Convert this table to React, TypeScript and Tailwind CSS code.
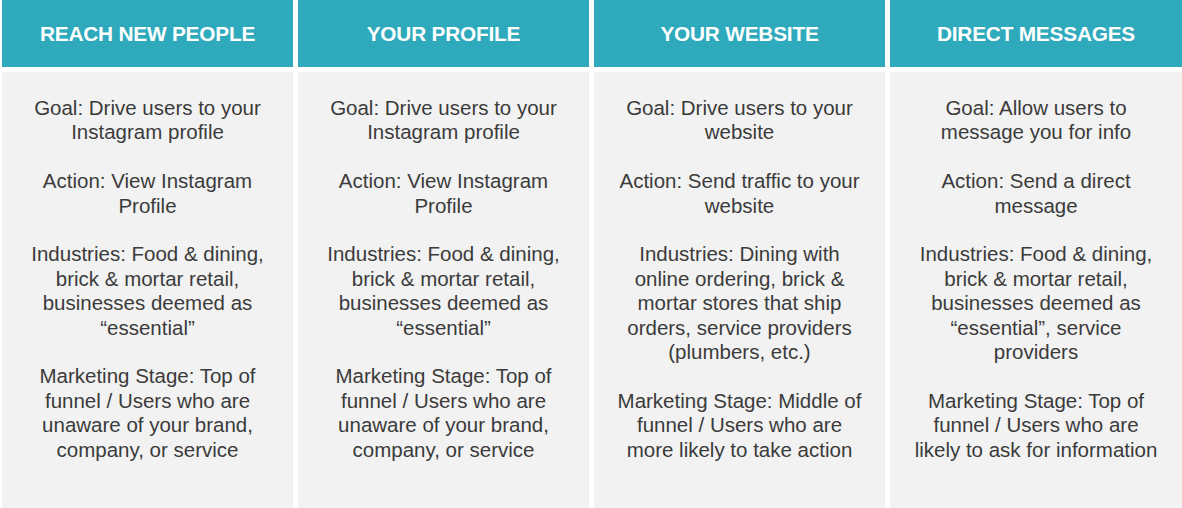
import React from 'react';

type Column = {
  title: string;
  items: string[];
};

const columns: Column[] = [
  {
    title: 'Reach New People',
    items: [
      'Goal: Drive users to your Instagram profile',
      'Action: View Instagram Profile',
      'Industries: Food & dining, brick & mortar retail, businesses deemed as \u201cessential\u201d',
      'Marketing Stage: Top of funnel / Users who are unaware of your brand, company, or service',
    ],
  },
  {
    title: 'Your Profile',
    items: [
      'Goal: Drive users to your Instagram profile',
      'Action: View Instagram Profile',
      'Industries: Food & dining, brick & mortar retail, businesses deemed as \u201cessential\u201d',
      'Marketing Stage: Top of funnel / Users who are unaware of your brand, company, or service',
    ],
  },
  {
    title: 'Your Website',
    items: [
      'Goal: Drive users to your website',
      'Action: Send traffic to your website',
      'Industries: Dining with online ordering, brick & mortar stores that ship orders, service providers (plumbers, etc.)',
      'Marketing Stage: Middle of funnel / Users who are more likely to take action',
    ],
  },
  {
    title: 'Direct Messages',
    items: [
      'Goal: Allow users to message you for info',
      'Action: Send a direct message',
      'Industries: Food & dining, brick & mortar retail, businesses deemed as \u201cessential\u201d, service providers',
      'Marketing Stage: Top of funnel / Users who are likely to ask for information',
    ],
  },
];

export default function App() {
  return (
    <div className="w-[1182px] h-[508px] bg-white pl-[2px] overflow-hidden font-['Liberation_Sans',Arial,sans-serif]">
      <div className="grid grid-cols-[291px_291px_291px_292px] gap-x-[5px] h-full">
        {columns.map((col) => (
          <div key={col.title} className="flex flex-col h-full">
            <div className="h-[67px] bg-[#2eaabc] flex items-center justify-center pt-[1px]">
              <h2 className="text-white font-bold text-[20.8px] uppercase tracking-[-0.2px]">{col.title}</h2>
            </div>
            <div className="mt-[5px] flex-1 bg-[#f2f2f2] px-5 pt-[24px] text-center text-[20.5px] leading-[24.4px] text-[#3b3b3b]">
              {col.items.map((item, i) => (
                <p key={i} className="mb-[24.4px]">
                  {item}
                </p>
              ))}
            </div>
          </div>
        ))}
      </div>
    </div>
  );
}
